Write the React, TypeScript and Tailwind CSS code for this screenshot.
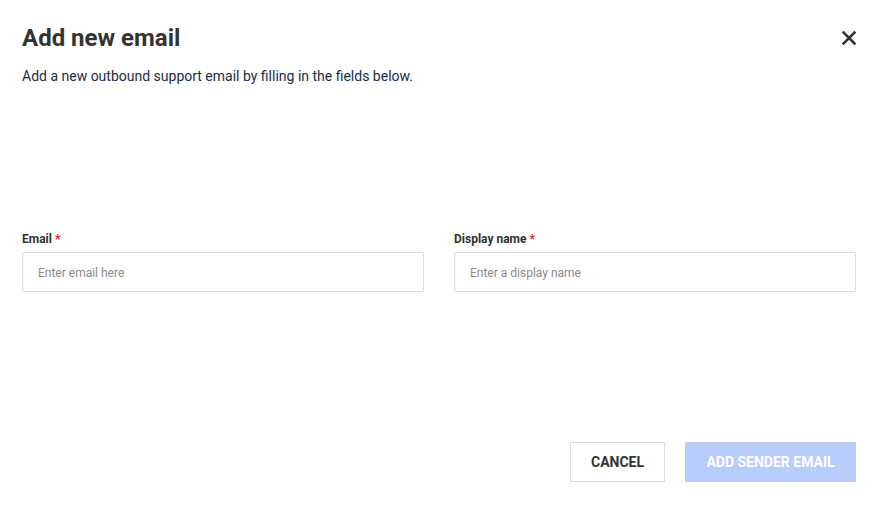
import React from "react";

function CloseIcon() {
    return (
        <svg width="14" height="14" viewBox="0 0 14 14" fill="none">
            <path d="M1.5 1.5L12.5 12.5M12.5 1.5L1.5 12.5" stroke="#333" strokeWidth="2.6" strokeLinecap="square" />
        </svg>
    );
}

function Field({ label, placeholder }: { label: string; placeholder: string }) {
    return (
        <div className="flex flex-col">
            <label className="text-[12px] leading-[16px] font-bold text-[#333]">
                {label} <span className="text-[#e02424]">*</span>
            </label>
            <input
                className="mt-[5px] h-[40px] w-full rounded-[2px] border border-[#dcdcdc] bg-white px-[15px] pt-[2px] text-[12px] text-[#333] placeholder:text-[#8a8a8a] outline-none"
                placeholder={placeholder}
            />
        </div>
    );
}

export default function App() {
    return (
        <div
            className="h-[508px] w-[881px] bg-white pl-[22px] pr-[25px] pt-[22px]"
            style={{ fontFamily: "Roboto, 'Liberation Sans', sans-serif" }}
        >
            <div className="flex h-[32px] items-center justify-between">
                <h1 className="text-[24px] leading-[32px] font-bold text-[#333]">Add new email</h1>
                <button className="flex h-[14px] w-[14px] items-center justify-center">
                    <CloseIcon />
                </button>
            </div>
            <p className="mt-[12px] text-[14px] leading-[20px] text-[#1b2b4a]">
                Add a new outbound support email by filling in the fields below.
            </p>

            <div className="mt-[145px] grid grid-cols-2 gap-[30px]">
                <Field label="Email" placeholder="Enter email here" />
                <Field label="Display name" placeholder="Enter a display name" />
            </div>

            <div className="mt-[150px] flex justify-end gap-[20px]">
                <button className="h-[40px] w-[95px] border border-[#dcdcdc] bg-white text-[14px] font-bold uppercase text-[#333]">
                    Cancel
                </button>
                <button className="h-[40px] w-[171px] bg-[#b8cdfb] text-[14px] font-bold uppercase text-white">
                    Add sender email
                </button>
            </div>
        </div>
    );
}
